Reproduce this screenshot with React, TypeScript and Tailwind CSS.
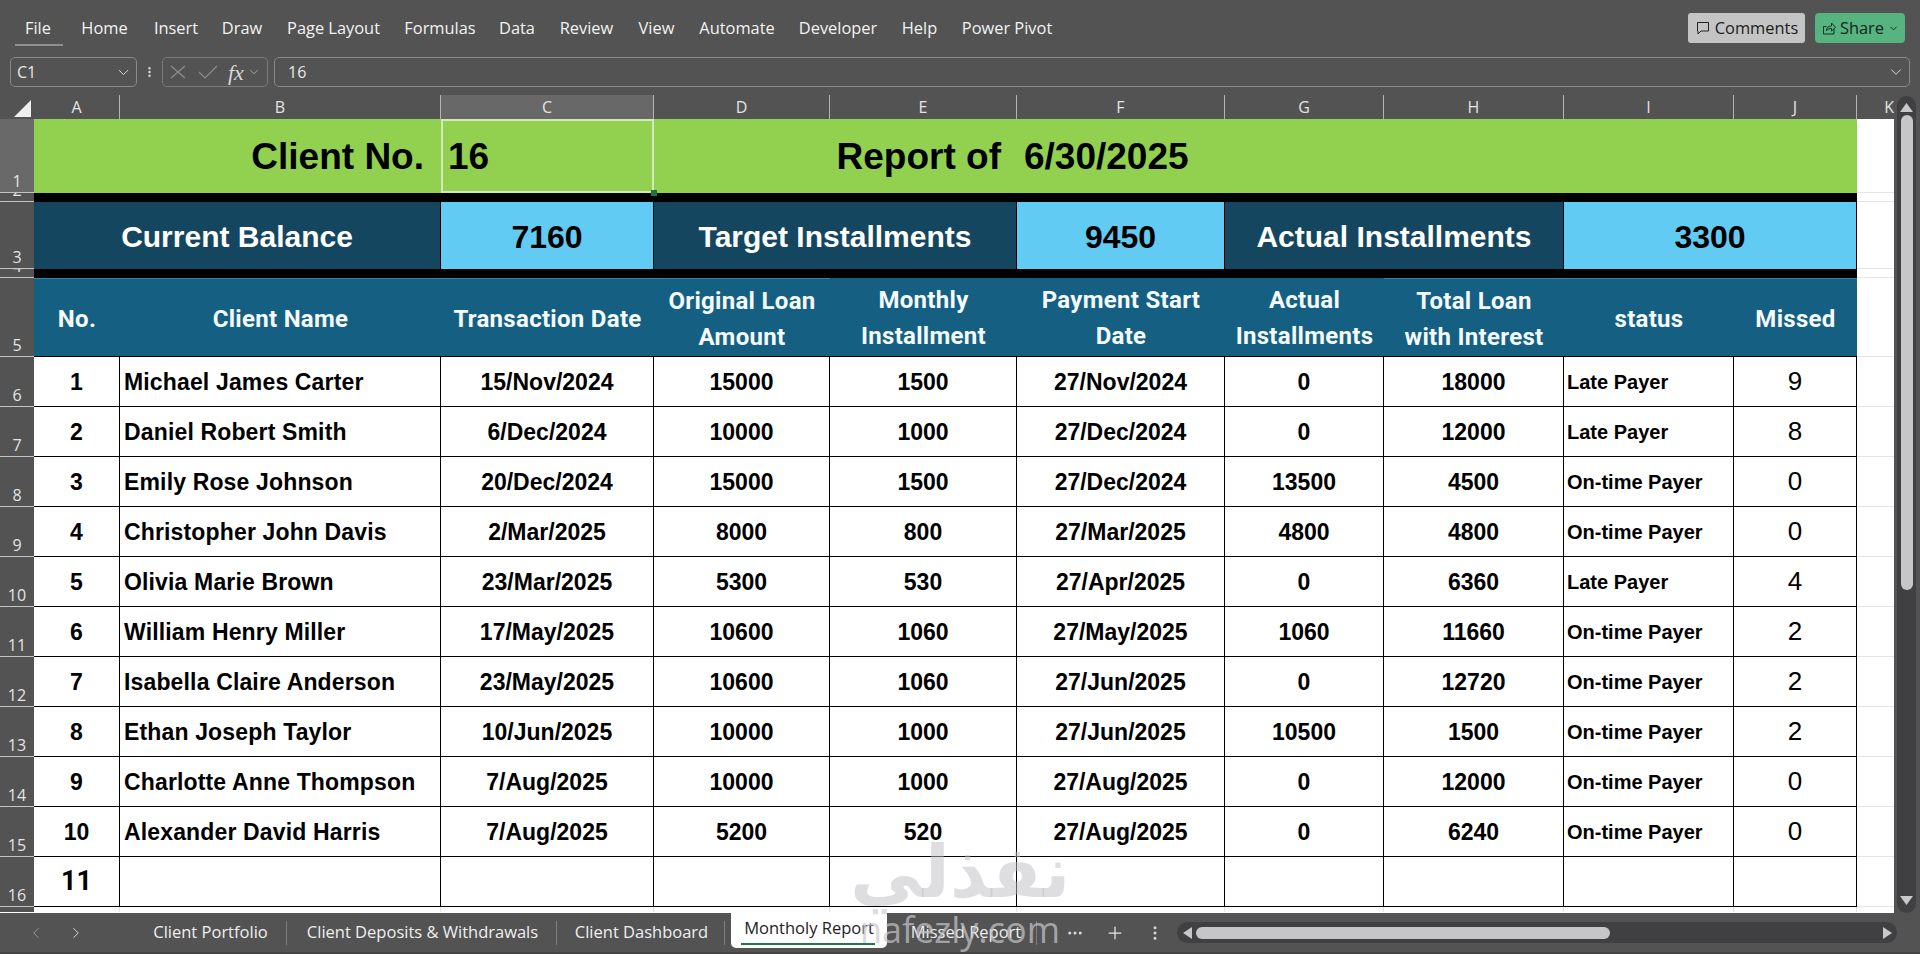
import React from "react";
import { ChevronDown, ChevronLeft, ChevronRight, Plus, Ellipsis, EllipsisVertical } from "lucide-react";

const ui = "font-['Open_Sans',sans-serif]";
const arial = "font-['Liberation_Sans',Arial,sans-serif]";
const narrow = "font-['Roboto',sans-serif]";

const menu = [
  { label: "File", w: "w-[58px]" },
  { label: "Home", w: "w-[75px]" },
  { label: "Insert", w: "w-[68px]" },
  { label: "Draw", w: "w-[64px]" },
  { label: "Page Layout", w: "w-[119px]" },
  { label: "Formulas", w: "w-[94px]" },
  { label: "Data", w: "w-[60px]" },
  { label: "Review", w: "w-[79px]" },
  { label: "View", w: "w-[61px]" },
  { label: "Automate", w: "w-[100px]" },
  { label: "Developer", w: "w-[102px]" },
  { label: "Help", w: "w-[61px]" },
  { label: "Power Pivot", w: "w-[114px]" },
];

const columns = ["A", "B", "C", "D", "E", "F", "G", "H", "I", "J"];

const clients = [
  ["Michael James Carter", "15/Nov/2024", "15000", "1500", "27/Nov/2024", "0", "18000", "Late Payer", "9"],
  ["Daniel Robert Smith", "6/Dec/2024", "10000", "1000", "27/Dec/2024", "0", "12000", "Late Payer", "8"],
  ["Emily Rose Johnson", "20/Dec/2024", "15000", "1500", "27/Dec/2024", "13500", "4500", "On-time Payer", "0"],
  ["Christopher John Davis", "2/Mar/2025", "8000", "800", "27/Mar/2025", "4800", "4800", "On-time Payer", "0"],
  ["Olivia Marie Brown", "23/Mar/2025", "5300", "530", "27/Apr/2025", "0", "6360", "Late Payer", "4"],
  ["William Henry Miller", "17/May/2025", "10600", "1060", "27/May/2025", "1060", "11660", "On-time Payer", "2"],
  ["Isabella Claire Anderson", "23/May/2025", "10600", "1060", "27/Jun/2025", "0", "12720", "On-time Payer", "2"],
  ["Ethan Joseph Taylor", "10/Jun/2025", "10000", "1000", "27/Jun/2025", "10500", "1500", "On-time Payer", "2"],
  ["Charlotte Anne Thompson", "7/Aug/2025", "10000", "1000", "27/Aug/2025", "0", "12000", "On-time Payer", "0"],
  ["Alexander David Harris", "7/Aug/2025", "5200", "520", "27/Aug/2025", "0", "6240", "On-time Payer", "0"],
];

const headers = [
  { text: "No.", line: true },
  { text: "Client Name", line: true },
  { text: "Transaction Date", line: true },
  { text: "Original Loan\nAmount", line: true },
  { text: "Monthly\nInstallment", line: false },
  { text: "Payment Start\nDate", line: false },
  { text: "Actual\nInstallments", line: false },
  { text: "Total Loan\nwith Interest", line: true },
  { text: "status", line: true },
  { text: "Missed", line: true },
];

const cellBase = "flex items-center border-b border-r border-black";

function RowHead({ n, active }: { n: number; active?: boolean }) {
  return (
    <div
      className={`flex items-end justify-center overflow-hidden border-b border-[#c4c4c4] text-[16px] leading-[22px] text-[#e4e4e4] ${ui} ${
        active ? "bg-[#696969]" : "bg-[#535353]"
      }`}
    >
      {n}
    </div>
  );
}

function Toolbar() {
  return (
    <div className={`flex h-[47px] items-center justify-between bg-[#535353] shadow-[0_2px_3px_rgba(0,0,0,0.35)] ${ui}`}>
      <div className="flex pl-[9px] pt-[10px] text-[16.4px] text-[#f2f2f2]">
        {menu.map((m) => (
          <div key={m.label} className={`relative text-center ${m.w}`}>
            {m.label}
            {m.label === "File" && (
              <div className="absolute bottom-[-5px] left-[6px] h-[2px] w-[48px] bg-[#8f8f8f]" />
            )}
          </div>
        ))}
      </div>
      <div className="flex items-center gap-[10px] pr-[15px] pt-[9px] text-[16.4px]">
        <div className="flex h-[30px] w-[117px] items-center justify-center gap-[4px] rounded-[3px] bg-[#c4c4c4] text-[#1c1c1c]">
          <svg width="16" height="16" viewBox="0 0 16 16" fill="none" stroke="#222" strokeWidth="1">
            <path d="M2.5 2.5h11v8.5H6l-3 3v-3H2.5z" />
          </svg>
          Comments
        </div>
        <div className="flex h-[30px] w-[90px] items-center justify-center gap-[3px] rounded-[4px] bg-[#57b37f] text-[#10261a]">
          <svg width="16" height="16" viewBox="0 0 16 16" fill="none" stroke="#12301f" strokeWidth="1">
            <path d="M5.5 6.5H2.5v7.5h10.5v-5" />
            <path d="M5.5 10.5c0-3 2-4.5 5-4.5V3l4 4.2-4 4V8.5c-2 0-3.5.5-5 2z" />
          </svg>
          Share
          <ChevronDown size={11} strokeWidth={2} className="ml-[1px]" />
        </div>
      </div>
    </div>
  );
}

function FormulaBar() {
  return (
    <div className={`flex h-[48px] items-start gap-[6px] bg-[#535353] pl-[10px] pr-[10px] pt-[10px] text-[16px] text-[#e8e8e8] ${ui}`}>
      <div className="flex h-[30px] w-[127px] items-center justify-between rounded-[5px] border border-[#8a8a8a] pl-[6px] pr-[4px]">
        C1
        <ChevronDown size={17} strokeWidth={1.4} className="text-[#d8d8d8]" />
      </div>
      <div className="flex h-[30px] w-[13px] items-center justify-center">
        <EllipsisVertical size={18} strokeWidth={2.4} className="text-[#dcdcdc]" />
      </div>
      <div className="flex h-[30px] w-[106px] items-center rounded-[5px] border border-[#7b7b7b] pl-[7px]">
        <svg width="16" height="14" viewBox="0 0 16 14" fill="none" stroke="#8f8f8f" strokeWidth="1.1" className="shrink-0">
          <path d="M1 1l14 12M15 1L1 13" />
        </svg>
        <svg width="20" height="14" viewBox="0 0 20 14" fill="none" stroke="#8f8f8f" strokeWidth="1.1" className="ml-[12px] shrink-0">
          <path d="M1 7l6 6L19 1" />
        </svg>
        <span className="ml-[10px] font-['Liberation_Serif',serif] text-[22px] italic text-[#d8d8d8]">fx</span>
        <ChevronDown size={14} strokeWidth={1.2} className="ml-[3px] text-[#c8c8c8]" />
      </div>
      <div className="flex h-[30px] flex-1 items-center justify-between rounded-[5px] border border-[#8a8a8a] pl-[13px] pr-[4px]">
        16
        <ChevronDown size={18} strokeWidth={1.3} className="text-[#d8d8d8]" />
      </div>
    </div>
  );
}

function Banner({ span, text }: { span: string; text: string }) {
  return (
    <div className={`flex items-center justify-center border-r border-black bg-[#15465f] pt-[2px] text-[30px] font-bold text-white ${span} ${arial}`}>
      {text}
    </div>
  );
}

function Figure({ text, span = "" }: { text: string; span?: string }) {
  return (
    <div className={`flex items-center justify-center border-r border-black bg-[#61cbf3] pt-[2px] text-[32px] font-bold ${span} ${arial}`}>
      {text}
    </div>
  );
}

function Sheet() {
  return (
    <div className="grid w-[1894px] grid-cols-[34px_86px_321px_213px_176px_187px_208px_159px_180px_170px_123px_37px] grid-rows-[24px_74px_9px_67px_9px_79px_repeat(11,50px)_5px] bg-white text-black">
      {/* Column letters */}
      <div className="flex items-end justify-end bg-[#535353] pb-[2px] pr-[2px]">
        <svg width="18" height="17" viewBox="0 0 18 17">
          <polygon points="17,0 17,17 0,17" fill="#efefef" />
        </svg>
      </div>
      {columns.map((c) => (
        <div
          key={c}
          className={`flex items-center justify-center border-r border-[#b4b4b4] text-[16px] text-[#e4e4e4] ${ui} ${
            c === "C" ? "bg-[#686868]" : "bg-[#535353]"
          }`}
        >
          {c}
        </div>
      ))}
      <div className={`flex items-center justify-end overflow-hidden bg-[#535353] text-[16px] text-[#e4e4e4] ${ui}`}>K</div>

      {/* Row 1 */}
      <RowHead n={1} active />
      <div className={`col-span-2 flex items-center justify-end bg-[#92d050] pr-[17px] pt-[1px] text-[37px] font-bold ${arial}`}>
        Client No.
      </div>
      <div className={`relative flex items-center border-2 border-[#d3e8bd] bg-[#92d050] pl-[5px] pt-[1px] text-[37px] font-bold ${arial}`}>
        16
        <div className="absolute bottom-[-5px] right-[-5px] h-[6px] w-[6px] bg-[#1e7145]" />
      </div>
      <div className={`col-span-2 flex items-center justify-end bg-[#92d050] pr-[16px] pt-[1px] text-[37px] font-bold ${arial}`}>
        Report of
      </div>
      <div className={`col-span-5 flex items-center bg-[#92d050] pl-[7px] pt-[1px] text-[37px] font-bold ${arial}`}>
        6/30/2025
      </div>
      <div className="border-b border-[#e4e4e4]" />

      {/* Row 2 */}
      <RowHead n={2} />
      <div className="col-span-10 bg-black" />
      <div className="border-b border-[#e4e4e4]" />

      {/* Row 3 */}
      <RowHead n={3} />
      <Banner span="col-span-2" text="Current Balance" />
      <Figure text="7160" />
      <Banner span="col-span-2" text="Target Installments" />
      <Figure text="9450" />
      <Banner span="col-span-2" text="Actual Installments" />
      <Figure text="3300" span="col-span-2" />
      <div className="border-b border-[#e4e4e4]" />

      {/* Row 4 */}
      <RowHead n={4} />
      <div className="col-span-10 bg-black" />
      <div className="border-b border-[#e4e4e4]" />

      {/* Row 5 */}
      <RowHead n={5} />
      {headers.map((h) => (
        <div
          key={h.text}
          className={`flex items-center justify-center whitespace-pre-line border-b border-black bg-[#156082] pt-[2px] text-center text-[24px] font-bold leading-[36px] tracking-[0.3px] text-[#f4f9fb] ${narrow} ${
            h.line ? "border-t border-t-[#2f86ad]" : ""
          }`}
        >
          {h.text}
        </div>
      ))}
      <div className="border-b border-[#e4e4e4]" />

      {/* Client rows */}
      {clients.map((row, i) => (
        <React.Fragment key={row[0]}>
          <RowHead n={i + 6} />
          <div className={`${cellBase} justify-center pt-[1px] text-[23px] font-bold ${arial}`}>{i + 1}</div>
          <div className={`${cellBase} pl-[4px] pt-[1px] text-[23px] font-bold tracking-[0.15px] ${arial}`}>{row[0]}</div>
          {row.slice(1, 7).map((v, j) => (
            <div key={j} className={`${cellBase} justify-center pt-[1px] text-[23px] font-bold ${arial}`}>
              {v}
            </div>
          ))}
          <div className={`${cellBase} pl-[3px] text-[20px] font-bold ${arial}`}>{row[7]}</div>
          <div className={`${cellBase} justify-center text-[26px] ${arial}`}>{row[8]}</div>
          <div className="border-b border-[#e4e4e4]" />
        </React.Fragment>
      ))}

      {/* Row 16 */}
      <RowHead n={16} />
      <div className={`${cellBase} justify-center text-[27px] font-bold ${narrow}`}>11</div>
      {columns.slice(1).map((c) => (
        <div key={c} className={cellBase} />
      ))}
      <div className="border-b border-[#e4e4e4]" />

      {/* Sliver of row 17 */}
      <div className="bg-[#535353]" />
      {columns.map((c) => (
        <div key={c} className="border-r border-[#e4e4e4]" />
      ))}
      <div />
    </div>
  );
}

function VerticalScroll() {
  return (
    <div className="ml-[3px] mt-[1px] flex h-[817px] w-[19px] flex-col items-center rounded-full bg-[#403f41] pt-[7px]">
      <svg width="13" height="9" viewBox="0 0 13 9" className="shrink-0">
        <polygon points="6.5,0 13,9 0,9" fill="#c8c8ca" />
      </svg>
      <div className="mt-[3px] h-[475px] w-[12px] rounded-full bg-[#c6c5c8]" />
      <div className="flex-1" />
      <svg width="13" height="9" viewBox="0 0 13 9" className="mb-[8px] shrink-0">
        <polygon points="0,0 13,0 6.5,9" fill="#c8c8ca" />
      </svg>
    </div>
  );
}

function Tab({ w, pl = "pl-[2px]", children }: { w: string; pl?: string; children: React.ReactNode }) {
  return (
    <div className={`flex h-[39px] items-center justify-center ${w}`}>
      <span className={`flex h-[24px] w-full items-center justify-center border-r border-[#7e7e7e] ${pl}`}>{children}</span>
    </div>
  );
}

function SheetTabs() {
  return (
    <div className={`flex h-[42px] items-start border-b-[3px] border-[#434343] bg-[#535353] text-[16.5px] text-[#efefef] ${ui}`}>
      <div className="flex h-[39px] w-[133px] items-center gap-[22px] pl-[27px]">
        <ChevronLeft size={18} strokeWidth={1.3} className="text-[#9c9c9c]" />
        <ChevronRight size={18} strokeWidth={1.3} className="text-[#d8d8d8]" />
      </div>
      <Tab w="w-[154px]">Client Portfolio</Tab>
      <Tab w="w-[270px]">Client Deposits &amp; Withdrawals</Tab>
      <Tab w="w-[168px]">Client Dashboard</Tab>
      <div className="relative ml-[6px] flex h-[35px] w-[156px] justify-center rounded-b-[5px] bg-white pt-[3px] text-[#222]">
        <span>Montholy Report</span>
        <div className="absolute bottom-[3px] left-[10px] h-[2px] w-[134px] bg-[#1f7a4a]" />
      </div>
      <Tab w="w-[150px]" pl="pl-[9px]">Missed Report</Tab>
      <div className="flex h-[39px] items-center">
        <Ellipsis size={18} strokeWidth={2} className="ml-[29px] text-[#d8d8d8]" />
        <Plus size={20} strokeWidth={1.5} className="ml-[21px] text-[#e8e8e8]" />
        <EllipsisVertical size={18} strokeWidth={2} className="ml-[21px] text-[#d8d8d8]" />
      </div>
      <div className="ml-[13px] mt-[9px] flex h-[21px] w-[720px] items-center rounded-full bg-[#403f41] pl-[6px] pr-[5px]">
        <svg width="9" height="12" viewBox="0 0 9 12" className="shrink-0">
          <polygon points="0,6 9,0 9,12" fill="#c8c8ca" />
        </svg>
        <div className="ml-[4px] h-[12px] w-[414px] rounded-full bg-[#c6c5c8]" />
        <div className="flex-1" />
        <svg width="9" height="12" viewBox="0 0 9 12" className="shrink-0">
          <polygon points="0,0 9,6 0,12" fill="#c8c8ca" />
        </svg>
      </div>
    </div>
  );
}

export default function App() {
  return (
    <div className="relative h-[954px] w-[1920px] overflow-hidden bg-[#535353]">
      <Toolbar />
      <FormulaBar />
      <div className="flex">
        <Sheet />
        <VerticalScroll />
      </div>
      <SheetTabs />
      {/* Watermark */}
      <div className="pointer-events-none absolute left-[850px] top-[832px] w-[220px] text-center font-['DejaVu_Sans',sans-serif] text-[72px] font-bold leading-[80px] text-[rgba(190,190,195,0.5)]">
        نفذلي
      </div>
      <div className={`pointer-events-none absolute left-[855px] top-[907px] w-[210px] text-center text-[36px] font-medium leading-[46px] text-[rgba(200,200,205,0.7)] ${ui}`}>
        nafezly.com
      </div>
    </div>
  );
}
